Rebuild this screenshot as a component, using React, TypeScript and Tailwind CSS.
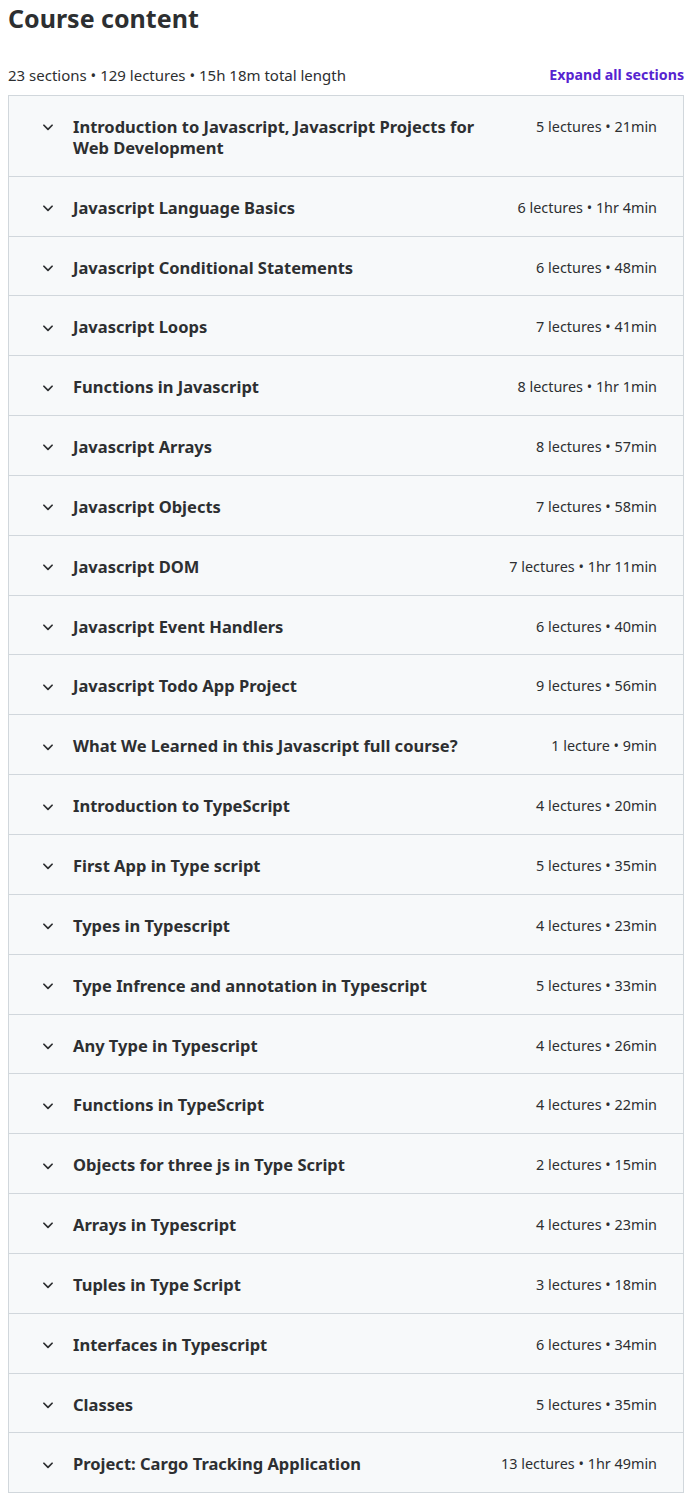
import React from "react";

const sections: [string, string][] = [
  ["Introduction to Javascript, Javascript Projects for Web Development", "5 lectures • 21min"],
  ["Javascript Language Basics", "6 lectures • 1hr 4min"],
  ["Javascript Conditional Statements", "6 lectures • 48min"],
  ["Javascript Loops", "7 lectures • 41min"],
  ["Functions in Javascript", "8 lectures • 1hr 1min"],
  ["Javascript Arrays", "8 lectures • 57min"],
  ["Javascript Objects", "7 lectures • 58min"],
  ["Javascript DOM", "7 lectures • 1hr 11min"],
  ["Javascript Event Handlers", "6 lectures • 40min"],
  ["Javascript Todo App Project", "9 lectures • 56min"],
  ["What We Learned in this Javascript full course?", "1 lecture • 9min"],
  ["Introduction to TypeScript", "4 lectures • 20min"],
  ["First App in Type script", "5 lectures • 35min"],
  ["Types in Typescript", "4 lectures • 23min"],
  ["Type Infrence and annotation in Typescript", "5 lectures • 33min"],
  ["Any Type in Typescript", "4 lectures • 26min"],
  ["Functions in TypeScript", "4 lectures • 22min"],
  ["Objects for three js in Type Script", "2 lectures • 15min"],
  ["Arrays in Typescript", "4 lectures • 23min"],
  ["Tuples in Type Script", "3 lectures • 18min"],
  ["Interfaces in Typescript", "6 lectures • 34min"],
  ["Classes", "5 lectures • 35min"],
  ["Project: Cargo Tracking Application", "13 lectures • 1hr 49min"],
];

function Chevron() {
  return (
    <svg width="14" height="14" viewBox="0 0 24 24" fill="none" stroke="#2d2f31" strokeWidth="3" strokeLinecap="round" strokeLinejoin="round" className="shrink-0">
      <path d="M5 9l7 7 7-7" />
    </svg>
  );
}

export default function App() {
  return (
    <div className="bg-white text-[#2d2f31] pl-2 pr-[16px] pb-2" style={{ fontFamily: '"Noto Sans", "Open Sans", sans-serif' }}>
      <h2 className="text-[25px] font-bold leading-[36px] pt-0 m-0">Course content</h2>
      <div className="flex items-center justify-between mt-[29px] mb-[10px] h-[20px]">
        <span className="text-[15px] leading-[20px] text-[#2d2f31]">23 sections • 129 lectures • 15h 18m total length</span>
        <button className="text-[14.2px] font-bold leading-[20px] text-[#5624d0]">Expand all sections</button>
      </div>
      <div className="border border-[#d1d7dc] bg-[#f7f9fa]">
        {sections.map(([title, meta], i) => (
          <div
            key={i}
            className={`flex items-start pl-[32px] pr-[26px] pt-[21px] pb-[17px] ${i > 0 ? "border-t border-[#d1d7dc]" : ""}`}
          >
            <div className="w-[32px] h-[20.85px] flex items-center">
              <Chevron />
            </div>
            <div className="flex-1 text-[16.5px] font-bold leading-[20.85px] pr-[40px]">{title}</div>
            <div className="text-[14.4px] leading-[20.85px] whitespace-nowrap">{meta}</div>
          </div>
        ))}
      </div>
    </div>
  );
}
